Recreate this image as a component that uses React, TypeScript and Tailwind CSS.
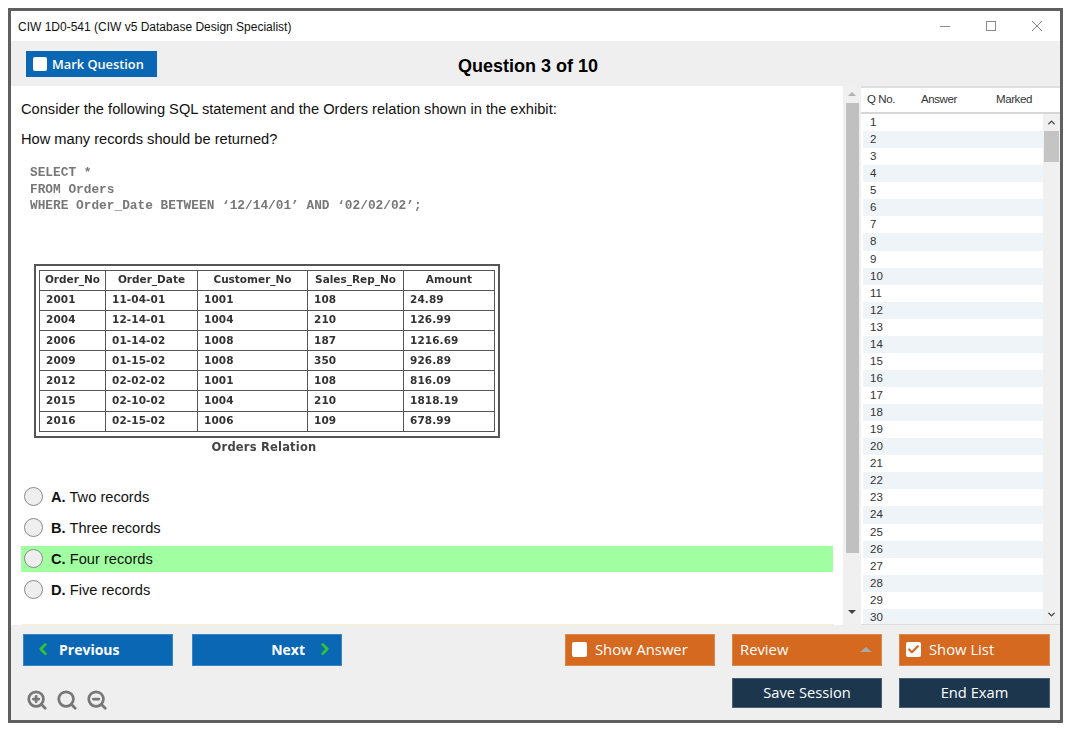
import React from "react";
import { Check, ChevronLeft, ChevronRight, ChevronDown, ChevronUp, Search, ZoomIn, ZoomOut } from "lucide-react";

const orders = [
  ["2001", "11-04-01", "1001", "108", "24.89"],
  ["2004", "12-14-01", "1004", "210", "126.99"],
  ["2006", "01-14-02", "1008", "187", "1216.69"],
  ["2009", "01-15-02", "1008", "350", "926.89"],
  ["2012", "02-02-02", "1001", "108", "816.09"],
  ["2015", "02-10-02", "1004", "210", "1818.19"],
  ["2016", "02-15-02", "1006", "109", "678.99"],
];

const answers = [
  { key: "A.", text: "Two records" },
  { key: "B.", text: "Three records" },
  { key: "C.", text: "Four records", correct: true },
  { key: "D.", text: "Five records" },
];

const rows = Array.from({ length: 30 }, (_, i) => i + 1);

function FooterButton({ className, children }: { className: string; children: React.ReactNode }) {
  return (
    <button className={`flex items-center font-['Open_Sans',sans-serif] text-white border border-white/20 ${className}`}>
      {children}
    </button>
  );
}

export default function App() {
  return (
    <div className="h-[735px] w-[1075px] bg-white pl-[8px] pt-[8px] overflow-hidden font-['Liberation_Sans',Arial,sans-serif]">
      {/* window */}
      <div className="flex h-[715px] w-[1055px] flex-col border-[3px] border-[#5f5f5f] bg-white">
        <div className="flex h-[30px] shrink-0 items-center justify-between pl-[7px] pr-[17px] text-[12px] text-[#111]">
          <span className="mt-[1px]">CIW 1D0-541 (CIW v5 Database Design Specialist)</span>
          <div className="mb-[1px] flex items-center gap-[34px]">
            <svg width="12" height="12" viewBox="0 0 12 12"><path d="M1 6.5h10" stroke="#8a8a8a" /></svg>
            <svg width="12" height="12" viewBox="0 0 12 12"><rect x="1.5" y="1.5" width="9" height="9" fill="none" stroke="#8a8a8a" /></svg>
            <svg width="12" height="12" viewBox="0 0 12 12"><path d="M1 1l10 10M11 1L1 11" stroke="#8a8a8a" /></svg>
          </div>
        </div>

        <div className="relative flex h-[45px] shrink-0 items-center bg-[#efefef] pl-[15px]">
          <div className="flex h-[26px] w-[131px] items-center gap-[5px] bg-[#0a67b3] pl-[7px] font-['Open_Sans',sans-serif] text-[12.8px] font-semibold text-white">
            <span className="h-[14px] w-[14px] rounded-[2px] bg-white" />
            <span className="mt-[2px]">Mark Question</span>
          </div>
          <div className="absolute left-0 right-0 top-[13px] pr-[15px] text-center text-[18px] font-bold leading-[24px] text-black">Question 3 of 10</div>
        </div>

        <div className="flex min-h-0 flex-1">
          <div className="flex w-[832px] shrink-0 flex-col pl-[10px] pr-[10px]">
            <p className="mt-[13px] text-[14.65px] leading-[20px] text-[#111]">Consider the following SQL statement and the Orders relation shown in the exhibit:</p>
            <p className="mt-[10px] text-[14.65px] leading-[20px] text-[#111]">How many records should be returned?</p>
            <pre className="ml-[9px] mt-[16px] font-['Liberation_Mono',monospace] text-[12.8px] font-bold leading-[16.5px] text-[#777] blur-[0.3px]">
              {"SELECT *\nFROM Orders\nWHERE Order_Date BETWEEN ‘12/14/01’ AND ‘02/02/02’;"}
            </pre>

            <div className="ml-[13px] mt-[49px] w-[466px] border-2 border-[#555] pb-[4px] pl-[3px] pr-[4px] pt-[4px] blur-[0.3px]">
              <table className="w-[455px] table-fixed border-collapse font-['DejaVu_Sans',sans-serif] text-[10.5px] font-bold text-[#333]">
                <colgroup>
                  <col className="w-[66px]" />
                  <col className="w-[92px]" />
                  <col className="w-[110px]" />
                  <col className="w-[96px]" />
                  <col className="w-[91px]" />
                </colgroup>
                <thead>
                  <tr className="h-[20px]">
                    {["Order_No", "Order_Date", "Customer_No", "Sales_Rep_No", "Amount"].map((h) => (
                      <th key={h} className="border border-[#555] px-0 text-center font-bold">{h}</th>
                    ))}
                  </tr>
                </thead>
                <tbody>
                  {orders.map((r) => (
                    <tr key={r[0]} className="h-[20.2px]">
                      {r.map((c, i) => (
                        <td key={i} className="border border-[#555] pl-[6px] tracking-[0.1px]">{c}</td>
                      ))}
                    </tr>
                  ))}
                </tbody>
              </table>
            </div>
            <div className="ml-[13px] mt-[1px] w-[460px] text-center font-['DejaVu_Sans',sans-serif] text-[11.5px] font-bold leading-[16px] tracking-[0.2px] text-[#444] blur-[0.3px]">Orders Relation</div>

            <div className="mt-[29px] flex flex-col gap-[5px]">
              {answers.map((a) => (
                <div key={a.key} className={`flex h-[26px] items-center gap-[8px] pl-[3px] text-[#111] ${a.correct ? "bg-[#a1ffa1]" : ""}`}>
                  <span className="h-[19px] w-[19px] rounded-full border border-[#8a8a8a] bg-[#eeeeee]" />
                  <span className="mt-[2px] text-[14.65px]"><b>{a.key}</b> {a.text}</span>
                </div>
              ))}
            </div>
            <div className="mt-auto h-[1px] bg-[#f8f0c8]" />
          </div>

          {/* question scrollbar */}
          <div className="flex w-[18px] shrink-0 flex-col items-center bg-[#f0f0f0] pt-[6px]">
            <span className="h-0 w-0 border-x-[4px] border-b-[4px] border-x-transparent border-b-[#b0b0b0]" />
            <span className="mt-[7px] h-[450px] w-[13px] bg-[#c0c0c0]" />
            <span className="mt-[57px] h-0 w-0 border-x-[4px] border-t-[4px] border-x-transparent border-t-[#444]" />
          </div>

          {/* question list */}
          <div className="flex min-w-0 flex-1 flex-col overflow-hidden border-y border-t-2 border-[#dedede] bg-white">
            <div className="flex h-[26px] shrink-0 items-center border-b-2 border-[#d6d6d6] text-[11.5px] tracking-[-0.4px] text-[#333]">
              <span className="ml-[6px] w-[54px]">Q No.</span>
              <span className="w-[75px]">Answer</span>
              <span>Marked</span>
            </div>
            <div className="flex min-h-0 flex-1">
              <div className="ml-[2px] w-[180px] shrink-0">
                {rows.map((n) => (
                  <div key={n} className={`h-[17.07px] pl-[7px] text-[11.5px] leading-[17px] text-[#333] ${n % 2 === 0 ? "bg-[#eff4f8]" : ""}`}>{n}</div>
                ))}
              </div>
              <div className="relative flex flex-1 flex-col items-center bg-[#f0f0f0] pt-[3px]">
                <ChevronUp size={11} strokeWidth={3} className="text-[#444]" />
                <span className="mt-[3px] h-[31px] w-[15px] bg-[#c4c4c4]" />
                <ChevronDown size={11} strokeWidth={3} className="mb-[4px] mt-auto text-[#444]" />
              </div>
            </div>
          </div>
        </div>

        {/* footer */}
        <div className="flex h-[95px] shrink-0 justify-between bg-[#efefef] pl-[12px] pr-[10px] pt-[9px]">
          <div>
            <div className="flex gap-[19px]">
              <FooterButton className="h-[32px] w-[150px] bg-[#0a67b3] pb-[2px] pl-[10px] text-[14px] font-bold">
                <ChevronLeft size={18} strokeWidth={4} className="text-[#2fc13c]" />
                <span className="ml-[7px]">Previous</span>
              </FooterButton>
              <FooterButton className="h-[32px] w-[150px] justify-end bg-[#0a67b3] pb-[2px] pr-[7px] text-[14px] font-bold">
                <span className="mr-[11px]">Next</span>
                <ChevronRight size={18} strokeWidth={4} className="text-[#2fc13c]" />
              </FooterButton>
            </div>
            <div className="ml-[3px] mt-[23px] flex gap-[8px] text-[#777]">
              <ZoomIn size={22} strokeWidth={3} />
              <Search size={22} strokeWidth={3} />
              <ZoomOut size={22} strokeWidth={3} />
            </div>
          </div>
          <div className="flex flex-col gap-[12px]">
            <div className="flex gap-[17px]">
              <FooterButton className="h-[32px] w-[150px] gap-[8px] bg-[#d4691f] pb-[2px] pl-[6px] text-[14.8px]">
                <span className="h-[15px] w-[15px] rounded-[2px] bg-white" />
                Show Answer
              </FooterButton>
              <FooterButton className="h-[32px] w-[150px] justify-between bg-[#d4691f] pb-[2px] pl-[7px] pr-[9px] text-[14.8px]">
                Review
                <span className="h-0 w-0 border-x-[6px] border-b-[5px] border-x-transparent border-b-[#a8a8a8]" />
              </FooterButton>
              <FooterButton className="h-[32px] w-[151px] gap-[8px] bg-[#d4691f] pb-[2px] pl-[6px] text-[14.8px]">
                <span className="flex h-[15px] w-[15px] items-center justify-center rounded-[2px] bg-white">
                  <Check size={13} strokeWidth={4} className="text-[#d4691f]" />
                </span>
                Show List
              </FooterButton>
            </div>
            <div className="flex justify-end gap-[17px]">
              <FooterButton className="h-[30px] w-[150px] justify-center bg-[#1c364d] pb-[2px] text-[14.7px]">Save Session</FooterButton>
              <FooterButton className="h-[30px] w-[151px] justify-center bg-[#1c364d] pb-[2px] text-[14.7px]">End Exam</FooterButton>
            </div>
          </div>
        </div>
      </div>
    </div>
  );
}
